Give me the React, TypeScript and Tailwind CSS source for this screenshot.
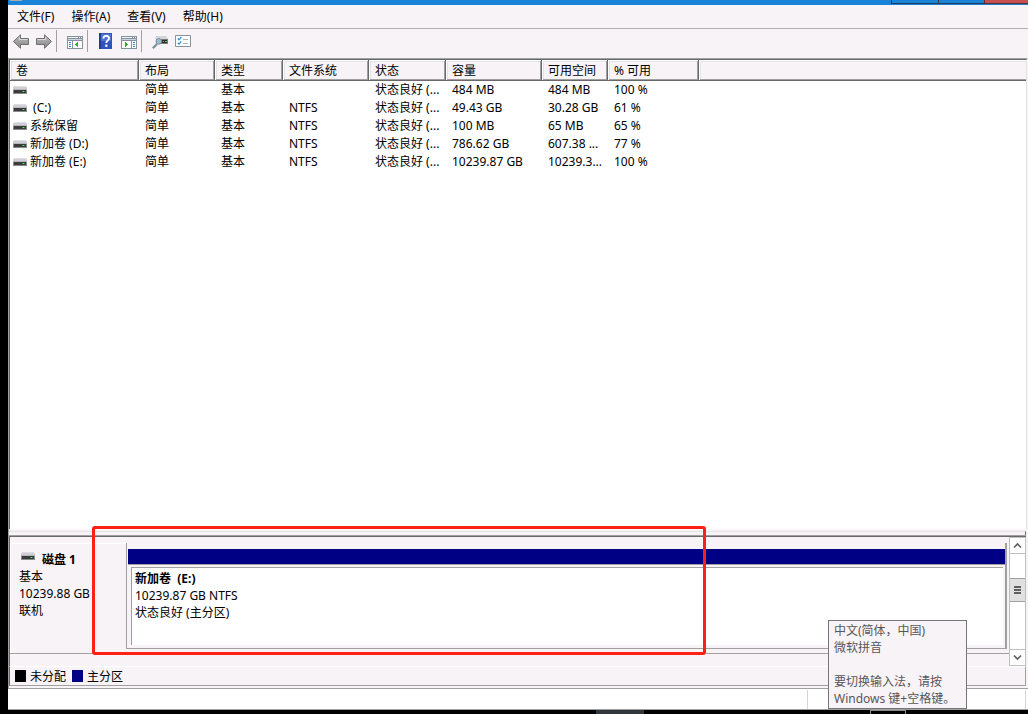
import type { ReactNode } from 'react'

interface Volume {
  name: string
  layout: string
  type: string
  fs: string
  status: string
  capacity: string
  free: string
  percent: string
}

const menus = ['文件(F)', '操作(A)', '查看(V)', '帮助(H)']

const columns = [
  { label: '卷', width: 'w-[129px]' },
  { label: '布局', width: 'w-[76px]' },
  { label: '类型', width: 'w-[68px]' },
  { label: '文件系统', width: 'w-[86px]' },
  { label: '状态', width: 'w-[77px]' },
  { label: '容量', width: 'w-[96px]' },
  { label: '可用空间', width: 'w-[66px]' },
  { label: '% 可用', width: 'w-[91px]' }
]

const volumes: Volume[] = [
  { name: '', layout: '简单', type: '基本', fs: '', status: '状态良好 (...', capacity: '484 MB', free: '484 MB', percent: '100 %' },
  { name: ' (C:)', layout: '简单', type: '基本', fs: 'NTFS', status: '状态良好 (...', capacity: '49.43 GB', free: '30.28 GB', percent: '61 %' },
  { name: '系统保留', layout: '简单', type: '基本', fs: 'NTFS', status: '状态良好 (...', capacity: '100 MB', free: '65 MB', percent: '65 %' },
  { name: '新加卷 (D:)', layout: '简单', type: '基本', fs: 'NTFS', status: '状态良好 (...', capacity: '786.62 GB', free: '607.38 ...', percent: '77 %' },
  { name: '新加卷 (E:)', layout: '简单', type: '基本', fs: 'NTFS', status: '状态良好 (...', capacity: '10239.87 GB', free: '10239.3...', percent: '100 %' }
]

function DriveIcon() {
  return (
    <svg width="14" height="8" viewBox="0 0 14 8" shapeRendering="crispEdges" className="shrink-0">
      <path d="M1 0h12v1H1z" fill="#dcdce2" />
      <path d="M0 1h14v3H0z" fill="#cfcfd6" />
      <path d="M0 3h14v1H0z" fill="#b4b4ba" />
      <path d="M0 4h14v4H0z" fill="#8a8a90" />
      <path d="M1 4h12v3H1z" fill="#3c3c3e" />
      <path d="M9 5h3v1H9z" fill="#1d8a2a" />
      <path d="M10 5h1v1h-1z" fill="#3dff55" />
    </svg>
  )
}

function ArrowIcon({ flip = false }: { flip?: boolean }) {
  return (
    <svg width="16" height="16" viewBox="0 0 16 16">
      <defs>
        <linearGradient id="arrow" x1="0" y1="0" x2="0" y2="1">
          <stop offset="0" stopColor="#c4c4c4" />
          <stop offset="0.5" stopColor="#a2a2a2" />
          <stop offset="1" stopColor="#858585" />
        </linearGradient>
      </defs>
      <path
        d={flip ? 'M15.5 8.5L8.5 1.8V5.5H.5v6h8v3.7z' : 'M.5 8.5l7-6.7v3.7h8v6h-8v3.7z'}
        fill="url(#arrow)"
        stroke="#707070"
      />
      <path d={flip ? 'M1.5 6.5h8V4.2' : 'M14.5 6.5h-8V4.2'} fill="none" stroke="#d8d8d8" />
    </svg>
  )
}

function WindowIcon({ side }: { side: 'left' | 'right' }) {
  return (
    <svg width="16" height="16" viewBox="0 0 16 16" shapeRendering="crispEdges">
      <path d="M0 3h16v13H0z" fill="#85939f" />
      <path d="M1 4h10v1H1zM12 4h1v1h-1zM14 4h1v1h-1z" fill="#eef2f5" />
      <path d="M1 6h14v1H1z" fill="#cdd5db" />
      {side === 'left' ? (
        <>
          <path d="M1 8h4v7H1zM6 8h9v7H6z" fill="#fff" />
          <path d="M2 9h2v1H2zM2 11h2v1H2zM2 13h2v1H2z" fill="#3f7fae" />
          <path d="M8 11.5l3-3v6z" fill="#2fb02a" />
        </>
      ) : (
        <>
          <path d="M1 8h9v7H1zM11 8h4v7h-4z" fill="#fff" />
          <path d="M12 9h2v1h-2zM12 11h2v1h-2zM12 13h2v1h-2z" fill="#3f7fae" />
          <path d="M7 11.5l-3-3v6z" fill="#2fb02a" />
        </>
      )}
    </svg>
  )
}

function HelpIcon() {
  return (
    <svg width="16" height="16" viewBox="0 0 16 16">
      <path d="M1 0h13v16H1z" fill="#2f55b8" />
      <path d="M1 0h2v16H1z" fill="#1d3c94" />
      <path d="M3 1h10v7H3z" fill="#4a72d0" />
      <path d="M5.4 5.4c0-3.4 5.6-3.4 5.6-.2 0 2.2-2.7 2.2-2.7 4.8" fill="none" stroke="#fff" strokeWidth="1.9" />
      <path d="M7.2 11.6h2.2v2.2H7.2z" fill="#fff" />
    </svg>
  )
}

function RescanIcon() {
  return (
    <svg width="16" height="16" viewBox="0 0 16 16">
      <path d="M4 3h10l2 3H3z" fill="#d5d5d8" />
      <path d="M4 6h12v5H4z" fill="#77797c" />
      <path d="M9 7h6v3H9z" fill="#2c2c2e" />
      <path d="M11 8h1v1h-1zM13 8h2v1h-2z" fill="#2ee04a" />
      <path d="M.8 15.2L5 11" stroke="#7c8b95" strokeWidth="2" />
      <circle cx="6.8" cy="8.4" r="2.8" fill="#9dbdd2" stroke="#7d8f9b" />
    </svg>
  )
}

function ChecklistIcon() {
  return (
    <svg width="16" height="16" viewBox="0 0 16 16">
      <path d="M.5 2.5h15v11H.5z" fill="#fff" stroke="#85939f" />
      <path d="M2.8 5.5l1.2 1.3L6.3 4M2.8 9.9l1.2 1.3 2.3-2.8" fill="none" stroke="#2490d8" strokeWidth="1.2" />
      <path d="M8 6.5h5M8 10.5h5" stroke="#aeb4ba" />
    </svg>
  )
}

function ToolButton({ label, children }: { label: string; children: ReactNode }) {
  return (
    <button aria-label={label} className="flex h-[22px] w-4 items-center justify-center">
      {children}
    </button>
  )
}

function ToolDivider() {
  return <div className="ml-1 mr-[10px] h-[22px] w-px bg-[#a0a0a0]" />
}

function Chevron({ d }: { d: string }) {
  return (
    <svg width="9" height="7" viewBox="0 0 9 7">
      <path d={d} fill="none" stroke="#606060" strokeWidth="1.6" />
    </svg>
  )
}

export default function App() {
  return (
    <div className="relative flex min-h-screen flex-col bg-black pl-2 font-['Noto_Sans','Noto_Sans_CJK_SC',sans-serif] text-[12px] leading-[17px] text-black">
      {/* Title bar */}
      <header className="flex h-[5px] items-start justify-between bg-[#1883d7]">
        <div className="ml-[2px] h-px w-3 bg-[#a9adb1]" />
        <div className="flex">
          <button aria-label="最小化" className="h-1 w-[47px] border-b border-l border-[#233b58]" />
          <button aria-label="最大化" className="h-1 w-[46px] border-b border-l border-[#233b58]" />
          <button aria-label="关闭" className="h-1 w-11 border-b border-l border-[#5a2b33] bg-[#c75050]" />
        </div>
      </header>

      {/* Menu */}
      <nav className="flex h-6 items-center gap-[17px] border-b border-[#b0b0b0] bg-[#f7f3f7] pl-[9px]">
        {menus.map((menu) => (
          <button key={menu} className="whitespace-nowrap">{menu}</button>
        ))}
      </nav>

      {/* Toolbar */}
      <div className="flex h-[29px] items-start bg-[#f7f3f7] pl-[5px] pt-px">
        <div className="flex gap-[7px]">
          <ToolButton label="后退"><ArrowIcon /></ToolButton>
          <ToolButton label="前进"><ArrowIcon flip /></ToolButton>
        </div>
        <ToolDivider />
        <ToolButton label="显示控制台树"><WindowIcon side="left" /></ToolButton>
        <ToolDivider />
        <div className="flex gap-[7px]">
          <ToolButton label="帮助"><HelpIcon /></ToolButton>
          <ToolButton label="显示操作窗格"><WindowIcon side="right" /></ToolButton>
        </div>
        <ToolDivider />
        <div className="flex gap-[7px]">
          <ToolButton label="重新扫描磁盘"><RescanIcon /></ToolButton>
          <ToolButton label="属性"><ChecklistIcon /></ToolButton>
        </div>
      </div>

      {/* Volume list */}
      <main className="flex flex-1 flex-col border-l border-r border-t border-[#a0a0a0] border-r-[#f7f3f7] bg-white">
        <div className="flex-1 border-l border-r border-t border-l-[#696969] border-r-[#e3e3e3] border-t-[#696969]">
          <table className="w-full table-fixed border-separate border-spacing-0 text-left">
            <thead>
              <tr className="h-[21px]">
                {columns.map((col) => (
                  <th
                    key={col.label}
                    className={`${col.width} whitespace-nowrap border-b border-r border-[#696969] bg-[#f7f3f7] p-0 pl-[6px] font-normal shadow-[inset_1px_1px_0_#fff,inset_-1px_-1px_0_#a0a0a0,inset_2px_2px_0_#e3e3e3]`}
                  >
                    {col.label}
                  </th>
                ))}
                <td className="border-b border-[#696969] bg-[#f7f3f7] p-0 shadow-[inset_1px_1px_0_#fff,inset_0_-1px_0_#a0a0a0,inset_2px_2px_0_#e3e3e3]" />
              </tr>
            </thead>
            <tbody>
              {volumes.map((v, idx) => (
                <tr key={idx} className="h-[18px] whitespace-nowrap align-top">
                  <td className="p-0 pl-[3px]">
                    <div className="flex h-[17px] items-center gap-[3px] whitespace-pre">
                      <DriveIcon />
                      <span>{v.name}</span>
                    </div>
                  </td>
                  <td className="p-0 pl-[6px]">{v.layout}</td>
                  <td className="p-0 pl-[6px]">{v.type}</td>
                  <td className="p-0 pl-[6px]">{v.fs}</td>
                  <td className="p-0 pl-[6px]">{v.status}</td>
                  <td className="p-0 pl-[6px]">{v.capacity}</td>
                  <td className="p-0 pl-[6px]">{v.free}</td>
                  <td className="p-0 pl-[6px]">{v.percent}</td>
                  <td className="p-0" />
                </tr>
              ))}
            </tbody>
          </table>
        </div>
      </main>

      {/* Splitter */}
      <div className="flex h-2 flex-col justify-end border-l border-[#a0a0a0] bg-[#f7f3f7] pr-[2px]">
        <div className="h-1 border-r border-t border-r-[#696969] border-t-[#e3e3e3]" />
        <div className="h-px bg-[#a0a0a0]" />
        <div className="h-px bg-[#696969]" />
      </div>

      {/* Disk view */}
      <section className="relative border-l border-[#a0a0a0] bg-[#f7f3f7]">
        <div className="flex h-[129px] border-l border-[#696969] pr-[2px]">
          <div className="flex flex-1 flex-col pt-[6px]">
            <div className="flex h-[111px] border-b border-[#a0a0a0]">
              <div className="w-[116px] whitespace-nowrap border-l border-t border-white pl-2 pt-[7px]">
                <div className="flex gap-[7px] pl-[2px] pt-px font-bold leading-[16px]">
                  <DriveIcon />
                  <span>磁盘 1</span>
                </div>
                <p>基本</p>
                <p>10239.88 GB</p>
                <p>联机</p>
              </div>
              <div className="mb-1 mr-[2px] flex flex-1 flex-col border-b border-l border-r-2 border-[#a0a0a0] pl-px pt-[6px]">
                <div className="h-4 border-b border-[#a0a0a0] bg-[#000084]" />
                <div className="mb-[3px] ml-[3px] mr-[2px] mt-[2px] flex-1 whitespace-pre border-l border-t border-[#a0a0a0] bg-white pl-[3px] pt-[2px]">
                  <p className="font-bold">新加卷  (E:)</p>
                  <p>10239.87 GB NTFS</p>
                  <p>状态良好 (主分区)</p>
                </div>
              </div>
            </div>
          </div>

          {/* Scrollbar */}
          <div className="flex w-[17px] flex-col border border-[#c0c0c0] bg-white">
            <button aria-label="向上滚动" className="flex h-4 items-center justify-center border-b border-[#c0c0c0]">
              <Chevron d="M1 5.5l3.5-3.5L8 5.5" />
            </button>
            <div className="flex-1 pt-6">
              <div className="flex h-6 flex-col items-center justify-center gap-px border-y border-[#a0a0a0] bg-[#e0e0e0]">
                <div className="h-[2px] w-[7px] bg-[#606060]" />
                <div className="h-[2px] w-[7px] bg-[#606060]" />
                <div className="h-[2px] w-[7px] bg-[#606060]" />
              </div>
            </div>
            <button aria-label="向下滚动" className="flex h-4 items-center justify-center border-t border-[#c0c0c0]">
              <Chevron d="M1 1.5L4.5 5 8 1.5" />
            </button>
          </div>
        </div>

        {/* Legend */}
        <div className="mr-[2px] flex h-5 items-center border-b border-l border-r border-t border-b-[#a0a0a0] border-l-[#696969] border-r-[#a0a0a0] border-t-white pl-[5px]">
          <span className="mr-1 h-3 w-[11px] bg-black" />
          <span className="mr-[6px]">未分配</span>
          <span className="mr-1 h-3 w-[11px] bg-[#000084]" />
          <span>主分区</span>
        </div>
        <div className="h-[2px]" />

        {/* Red highlight around the partition */}
        <div className="pointer-events-none absolute -top-[11px] left-[83px] h-[129px] w-[614px] rounded-[3px] border-[3px] border-[#ff2015]" />
      </section>

      {/* Status bar */}
      <footer className="flex h-[22px] justify-end border-y border-[#a0a0a0] bg-white pt-px">
        <div className="w-[219px] border-l border-r border-[#d5d5d5]" />
        <div className="w-[2px]" />
      </footer>

      {/* Desktop edge */}
      <div className="flex h-1 justify-end">
        <div className="h-1 w-12 bg-[#31353c]" />
        <div className="ml-[226px] mr-[122px] h-1 w-9 border-x border-t border-[#8a8a8a]" />
      </div>

      {/* Input method tooltip */}
      <div role="tooltip" className="absolute bottom-[5px] right-[61px] w-[139px] whitespace-nowrap border border-[#767676] bg-[#f7f3f7] pb-px pl-[5px] pt-px text-[#575757]">
        <p>中文(简体，中国)</p>
        <p className="mb-[17px]">微软拼音</p>
        <p>要切换输入法，请按</p>
        <p>Windows 键+空格键。</p>
      </div>
    </div>
  )
}
